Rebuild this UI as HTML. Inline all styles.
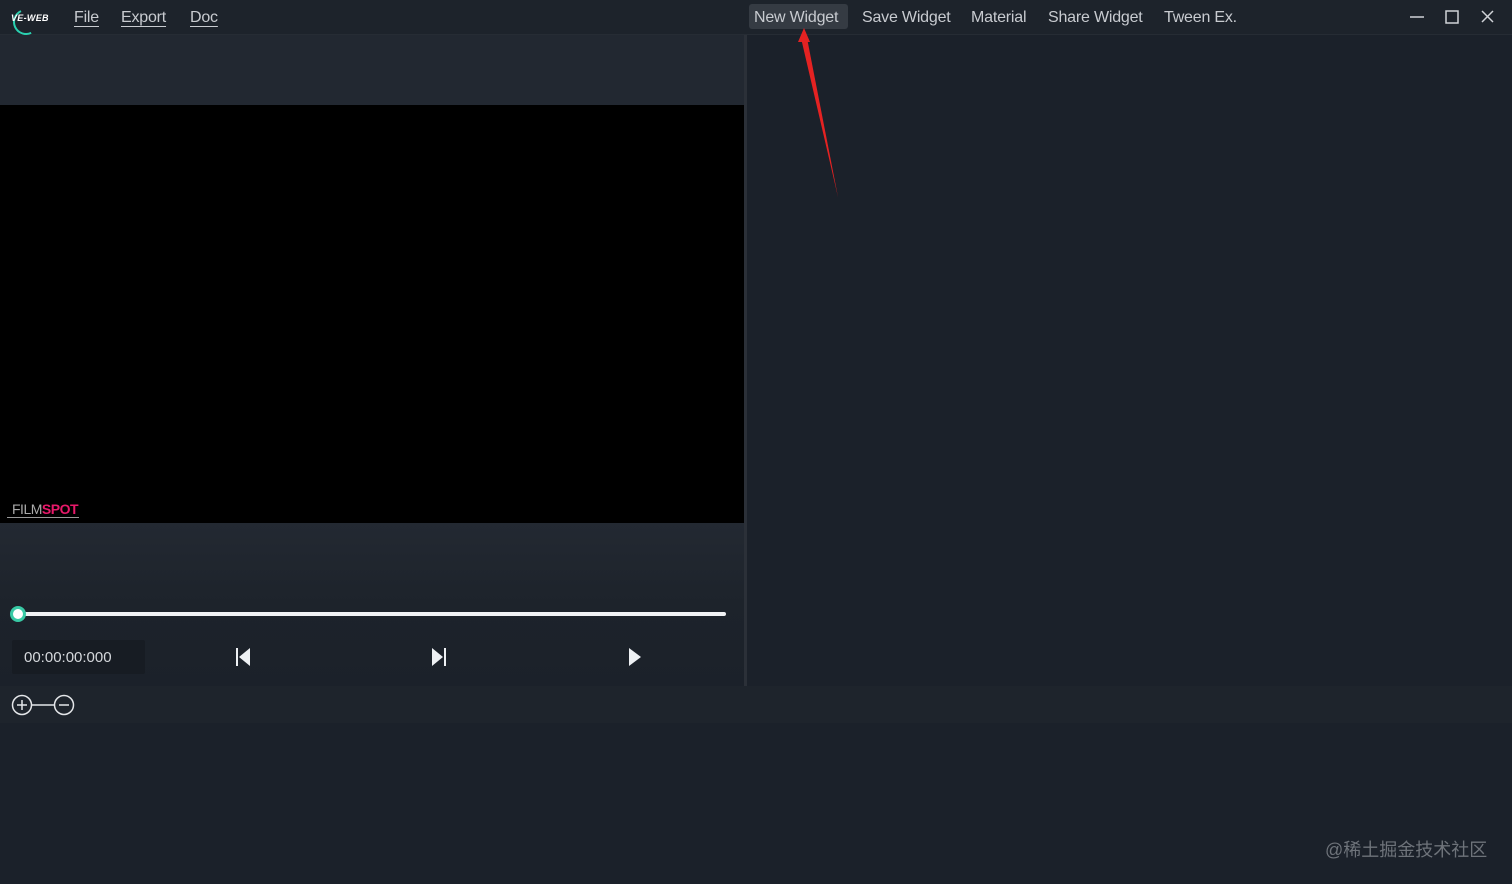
<!DOCTYPE html>
<html><head><meta charset="utf-8"><style>
body{margin:0;width:1512px;height:884px;background:#1b212a;font-family:"Liberation Sans","Noto Sans CJK SC",sans-serif;position:relative;overflow:hidden;color:#c9ccd1}
.a{position:absolute}
.menu{top:9px;font-size:16px;color:#c8cbd0;letter-spacing:-0.2px}
.u{text-decoration:underline;text-underline-offset:4px}
</style></head><body>
<div class="a" style="left:0;top:0;width:1512px;height:34px;background:#1d232b;border-bottom:1px solid #262c34"></div>
<div class="a" style="left:13px;top:9px;width:22px;height:22px;border-radius:50%;border:2px solid #2ad0b0;border-top-color:transparent;border-right-color:transparent;transform:rotate(20deg)"></div>
<div class="a" style="left:11px;top:13px;font:italic bold 9px 'Liberation Sans';color:#fff;letter-spacing:0.3px">VE-WEB</div>
<div class="a menu u" style="left:74px">File</div>
<div class="a menu u" style="left:121px">Export</div>
<div class="a menu u" style="left:190px">Doc</div>
<div class="a" style="left:749px;top:4px;width:99px;height:25px;background:#353b43;border-radius:3px"></div>
<div class="a menu" style="left:754px">New Widget</div>
<div class="a menu" style="left:862px">Save Widget</div>
<div class="a menu" style="left:971px">Material</div>
<div class="a menu" style="left:1048px">Share Widget</div>
<div class="a menu" style="left:1164px">Tween Ex.</div>
<svg class="a" style="left:1400px;top:5px" width="110" height="24" stroke="#d0d3d8" stroke-width="1.5" fill="none"><path d="M10 12h14"/><rect x="46" y="6" width="12" height="12"/><path d="M82 6l11 11M93 6l-11 11"/></svg>
<div class="a" style="left:0;top:35px;width:744px;height:70px;background:#222831"></div>
<div class="a" style="left:0;top:105px;width:744px;height:418px;background:#000"></div>
<div class="a" style="left:12px;top:501px;font-size:14px;color:#aaa;letter-spacing:-0.5px">FILM<span style="color:#e8196a;font-weight:bold">SPOT</span></div>
<div class="a" style="left:7px;top:517px;width:72px;height:1px;background:#999"></div>
<div class="a" style="left:0;top:523px;width:744px;height:163px;background:linear-gradient(#232932,#1d232b 80px,#1b212a)"></div>
<div class="a" style="left:744px;top:35px;width:3px;height:651px;background:#2b3038"></div>
<div class="a" style="left:18px;top:612px;width:708px;height:4px;background:#f0f2f4;border-radius:2px"></div>
<div class="a" style="left:10px;top:606px;width:10px;height:10px;border-radius:50%;background:#fff;border:3px solid #38c9a5"></div>
<div class="a" style="left:12px;top:640px;width:133px;height:34px;background:#171c23;border-radius:2px"></div>
<div class="a" style="left:24px;top:649px;font-size:15px;color:#d5d8dc">00:00:00:000</div>
<svg class="a" style="left:234px;top:646px" width="20" height="22" fill="#eef1f4"><rect x="2" y="2" width="2" height="18"/><path d="M16 2v18L5 11z"/></svg>
<svg class="a" style="left:430px;top:646px" width="20" height="22" fill="#eef1f4"><rect x="14" y="2" width="2" height="18"/><path d="M2 2v18l11-9z"/></svg>
<svg class="a" style="left:626px;top:646px" width="20" height="22" fill="#eef1f4"><path d="M3 2v18l12-9z"/></svg>
<div class="a" style="left:0;top:686px;width:1512px;height:37px;background:#1e242c"></div>
<svg class="a" style="left:10px;top:694px" width="68" height="22" stroke="#e4e6e9" stroke-width="1.5" fill="none"><circle cx="12" cy="11" r="9.5"/><path d="M7 11h10M12 6v10M22 11h22"/><circle cx="54" cy="11" r="9.5"/><path d="M49 11h10"/></svg>
<div class="a" style="left:1325px;top:836px;font-size:18px;color:#6e737a">@稀土掘金技术社区</div>
<svg class="a" style="left:795px;top:28px" width="50" height="175"><path d="M6 10L43 169L12 10z" fill="#e52222"/><path d="M3 14L9 0L15 14z" fill="#e52222"/></svg>
</body></html>
